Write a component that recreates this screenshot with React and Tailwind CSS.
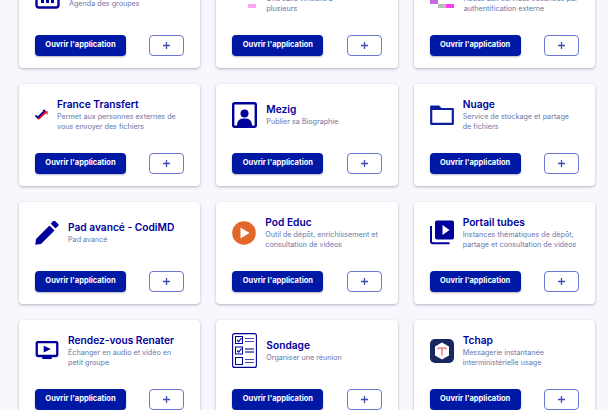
const font = '[font-family:Inter,"Liberation_Sans",sans-serif]';

function CalendarIcon() {
  return (
    <svg viewBox="0 0 25 25" className="w-[25px] h-[25px] shrink-0">
      <rect x="1.5" y="1.5" width="22" height="22" rx="2.5" fill="none" stroke="#00009a" strokeWidth="2.4" />
      <rect x="1" y="1" width="23" height="7" fill="#00009a" />
      <rect x="6" y="14" width="3" height="5" fill="#00009a" />
      <rect x="11" y="14" width="3" height="5" fill="#00009a" />
      <rect x="16" y="14" width="3" height="5" fill="#00009a" />
    </svg>
  );
}

function PinkBlocksIcon() {
  return (
    <svg viewBox="0 0 25 25" className="w-[25px] h-[25px] shrink-0">
      <rect x="16" y="20" width="8" height="4" fill="#ffa6f5" />
    </svg>
  );
}

function MosaicIcon() {
  return (
    <svg viewBox="0 0 25 25" className="w-[25px] h-[25px] shrink-0">
      <rect x="0" y="16" width="8" height="4" fill="#c56ae0" />
      <rect x="8" y="20" width="8" height="4" fill="#bdbdbd" />
      <rect x="16" y="20" width="8" height="4" fill="#ff3df0" />
    </svg>
  );
}

function TransfertIcon() {
  return (
    <svg viewBox="0 0 14 11" className="w-[13px] h-[11px] shrink-0">
      <path d="M0.5 6.5 L3 9 L10 2" fill="none" stroke="#000091" strokeWidth="2" />
      <path d="M8.5 1 L10.5 1 L10.5 3" fill="none" stroke="#000091" strokeWidth="1.2" />
      <path d="M3.5 10.5 L12 3" fill="none" stroke="#e1000f" strokeWidth="1.6" />
      <path d="M10 2.5 L13 2.5 L13 5.5" fill="none" stroke="#e1000f" strokeWidth="1.2" />
    </svg>
  );
}

function MezigIcon() {
  return (
    <svg viewBox="0 0 25 26" className="w-[25px] h-[26px] shrink-0">
      <rect x="1.2" y="1.2" width="22.6" height="23.6" rx="1.5" fill="none" stroke="#00009a" strokeWidth="2.4" />
      <circle cx="12.5" cy="11.5" r="4" fill="#00009a" />
      <path d="M5 24 C5 18 8 16.5 12.5 16.5 C17 16.5 20 18 20 24 Z" fill="#00009a" />
    </svg>
  );
}

function FolderIcon() {
  return (
    <svg viewBox="0 0 24 20" className="w-[24px] h-[20px] shrink-0">
      <path d="M1.2 18.8 V1.5 H8.5 L11 4 H22.8 V18.8 Z" fill="none" stroke="#0a1ea0" strokeWidth="2.2" strokeLinejoin="round" />
      <path d="M1.2 2 H9 L11 5 H1.2 Z" fill="#0a1ea0" />
    </svg>
  );
}

function PencilIcon() {
  return (
    <svg viewBox="0 0 24 24" className="w-[24px] h-[24px] shrink-0">
      <path d="M0.3 23.7 L1 18 L14.5 4.5 L19.5 9.5 L6 23 Z" fill="#00009a" />
      <rect x="16.3" y="0.8" width="7" height="5" rx="1" transform="rotate(45 19.8 3.3)" fill="#00009a" />
    </svg>
  );
}

function PodIcon() {
  return (
    <svg viewBox="0 0 24 24" className="w-[24px] h-[24px] shrink-0">
      <circle cx="12" cy="12" r="11.8" fill="#e4672a" />
      <path d="M8.5 6.5 L17.5 12 L8.5 17.5 Z" fill="#fff" />
    </svg>
  );
}

function TubesIcon() {
  return (
    <svg viewBox="0 0 24 25" className="w-[24px] h-[25px] shrink-0">
      <rect x="5" y="0.5" width="19" height="19" rx="2" fill="#00009a" />
      <path d="M12.5 5 L19.5 10 L12.5 15 Z" fill="#fff" />
      <path d="M1 6 V21 C1 22.5 2 23.3 3 23.3 H19.5" fill="none" stroke="#00009a" strokeWidth="2" />
    </svg>
  );
}

function VisioIcon() {
  return (
    <svg viewBox="0 0 24 20" className="w-[24px] h-[19px] shrink-0">
      <rect x="1.2" y="1.2" width="21.6" height="14.6" rx="1" fill="none" stroke="#00009a" strokeWidth="2.4" />
      <path d="M8.5 5 L16 8.5 L8.5 12 Z" fill="#00009a" />
      <rect x="7" y="16" width="10" height="3" fill="#00009a" />
    </svg>
  );
}

function SondageIcon() {
  return (
    <svg viewBox="0 0 25 35" className="w-[25px] h-[35px] shrink-0">
      <rect x="0.6" y="0.6" width="23.8" height="33.8" rx="2" fill="none" stroke="#00009a" strokeWidth="1.1" />
      <rect x="3.5" y="3.5" width="7" height="7" fill="none" stroke="#00009a" strokeWidth="1" />
      <path d="M5 7 L6.7 8.7 L9.5 5" fill="none" stroke="#00009a" strokeWidth="1.1" />
      <path d="M13 5.5 H22 M13 8.5 H22" stroke="#4a4aa8" strokeWidth="1" />
      <rect x="3.5" y="14" width="7" height="7" fill="none" stroke="#00009a" strokeWidth="1" />
      <path d="M5 17.5 L6.7 19.2 L9.5 15.5" fill="none" stroke="#00009a" strokeWidth="1.1" />
      <path d="M13 16 H22 M13 19 H22" stroke="#4a4aa8" strokeWidth="1.3" />
      <rect x="3.5" y="24.5" width="7" height="7" fill="none" stroke="#00009a" strokeWidth="1" />
      <path d="M13 26.5 H22 M13 29.5 H22" stroke="#4a4aa8" strokeWidth="1" />
    </svg>
  );
}

function TchapIcon() {
  return (
    <svg viewBox="0 0 24 24" className="w-[24px] h-[24px] shrink-0">
      <rect x="0" y="0" width="24" height="24" rx="5" fill="#18275e" />
      <path d="M12 3.5 L19 7.5 V16.5 L12 20.5 L5 16.5 V7.5 Z" fill="#fff" />
      <path d="M8 9 H16 M12 9 V16.5 M8 9 V10.5 M16 9 V10.5" fill="none" stroke="#e8505b" strokeWidth="1.1" />
    </svg>
  );
}

const apps = [
  { title: 'Agenda', desc: ['Agenda des groupes'], icon: <CalendarIcon /> },
  { title: 'Classes virtuelles', desc: ['Une salle virtuelle à', 'plusieurs'], icon: <PinkBlocksIcon /> },
  { title: 'Portail', desc: ['Accès aux services sécurisés par', 'authentification externe'], icon: <MosaicIcon /> },
  { title: 'France Transfert', desc: ['Permet aux personnes externes de', 'vous envoyer des fichiers'], icon: <TransfertIcon /> },
  { title: 'Mezig', desc: ['Publier sa Biographie'], icon: <MezigIcon /> },
  { title: 'Nuage', desc: ['Service de stockage et partage', 'de fichiers'], icon: <FolderIcon /> },
  { title: 'Pad avancé - CodiMD', desc: ['Pad avancé'], icon: <PencilIcon /> },
  { title: 'Pod Educ', desc: ['Outil de dépôt, enrichissement et', 'consultation de vidéos'], icon: <PodIcon /> },
  { title: 'Portail tubes', desc: ['Instances thématiques de dépôt,', 'partage et consultation de vidéos'], icon: <TubesIcon /> },
  { title: 'Rendez-vous Renater', desc: ['Échanger en audio et vidéo en', 'petit groupe'], icon: <VisioIcon /> },
  { title: 'Sondage', desc: ['Organiser une réunion'], icon: <SondageIcon /> },
  { title: 'Tchap', desc: ['Messagerie instantanée', 'interministérielle usage'], icon: <TchapIcon /> },
];

function AppCard({ app }) {
  return (
    <div className="h-[102px] bg-white rounded-[4px] shadow-[0_1px_3px_rgba(0,0,40,0.28)] px-4 pb-3 flex flex-col">
      <div className="flex-1 flex items-center gap-[9px] min-h-0 pb-[8px]">
        {app.icon}
        <div className="min-w-0">
          <div className="text-[10.2px] leading-[13px] font-semibold text-[#00009a] mb-[1px]">{app.title}</div>
          <div className="text-[7.2px] leading-[10px] text-[#6a76a8]">
            {app.desc.map((line) => (
              <div key={line} className="whitespace-nowrap">{line}</div>
            ))}
          </div>
        </div>
      </div>
      <div className="flex items-center justify-between">
        <button className="w-[91px] h-[21px] pb-[1px] rounded-[4px] bg-[#0019a5] text-white text-[7.5px] font-bold shadow-[0_1px_2px_rgba(0,0,60,0.3)]">
          Ouvrir l'application
        </button>
        <button className="w-[35px] h-[21px] rounded-[4px] border border-[#6d78d2] bg-white flex items-center justify-center">
          <svg viewBox="0 0 9 9" className="w-[9px] h-[9px]">
            <path d="M4.5 1 V8 M1 4.5 H8" stroke="#3f4ab5" strokeWidth="1.3" />
          </svg>
        </button>
      </div>
    </div>
  );
}

export default function App() {
  return (
    <div className={`h-[410px] w-[608px] overflow-hidden bg-[#f7f7fd] ${font}`}>
      <div className="grid grid-cols-3 gap-4 pl-[19px] pr-[13px] -mt-[34px]">
        {apps.map((app) => (
          <AppCard key={app.title} app={app} />
        ))}
      </div>
    </div>
  );
}
